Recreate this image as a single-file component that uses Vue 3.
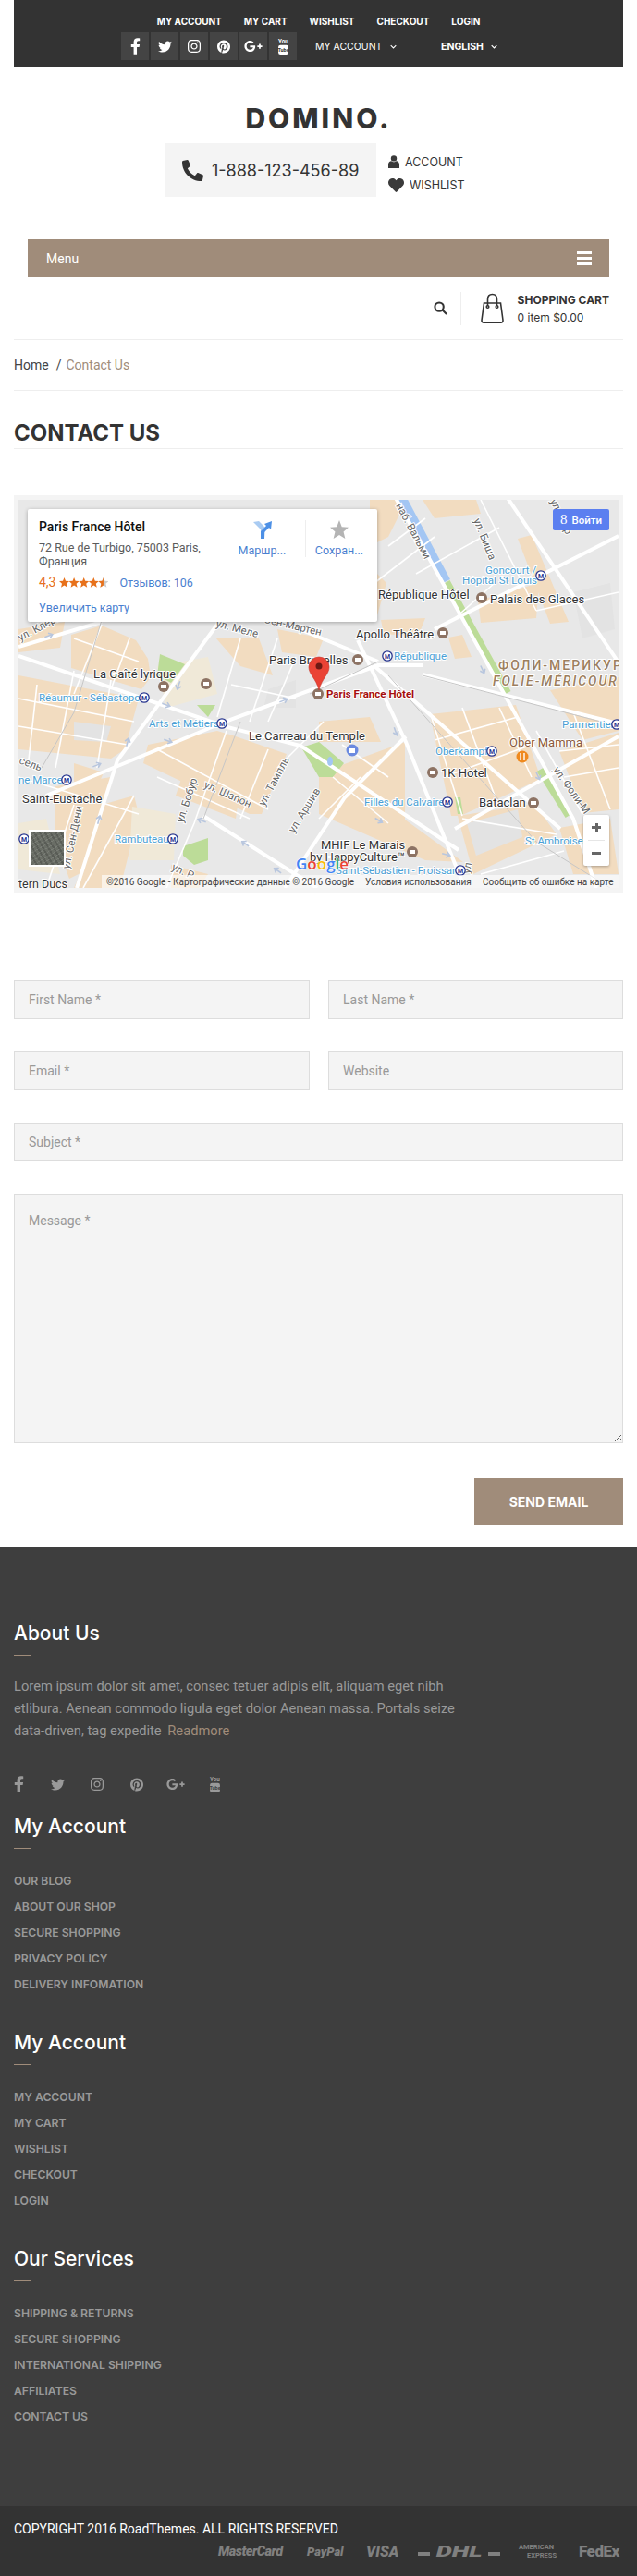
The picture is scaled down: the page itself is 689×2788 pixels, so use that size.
<template>
  <div class="page">
    <header class="wrap">
      <div class="topbar">
        <ul class="toplinks">
          <li v-for="l in topLinks" :key="l">{{ l }}</li>
        </ul>
        <div class="toprow">
          <a v-for="s in socials" :key="s.name" class="sq">
            <svg v-if="s.d" :viewBox="s.vb" :width="s.w" :height="s.h" fill="#fff"><path :d="s.d" /></svg>
            <svg v-else viewBox="0 0 14 22" width="13" height="20">
              <text x="7" y="8" text-anchor="middle" class="yt-a" fill="#fff">You</text>
              <rect x="1" y="9.5" width="12" height="11.5" rx="2.5" fill="#fff" />
              <text x="7" y="18" text-anchor="middle" class="yt-b" fill="#333">Tube</text>
            </svg>
          </a>
          <span class="acc">MY ACCOUNT <svg class="chev" viewBox="0 0 10 6" width="7" height="5"><path d="M1 1l4 4 4-4" fill="none" stroke="#fff" stroke-width="1.5" /></svg></span>
          <span class="lang">ENGLISH <svg class="chev" viewBox="0 0 10 6" width="7" height="5"><path d="M1 1l4 4 4-4" fill="none" stroke="#fff" stroke-width="1.8" /></svg></span>
        </div>
      </div>

      <div class="brand">
        <div class="logo">DOMINO.</div>
        <div class="contact-row">
          <div class="phone">
            <svg viewBox="0 0 512 512" width="23" height="23" fill="#333"><path transform="matrix(-1 0 0 1 512 0)" d="M493.4 24.6l-104-24c-11.3-2.6-22.9 3.3-27.5 13.9l-48 112c-4.2 9.8-1.4 21.3 6.9 28l60.6 49.6c-36 76.7-98.9 140.5-177.2 177.2l-49.6-60.6c-6.8-8.3-18.2-11.1-28-6.9l-112 48C3.9 366.5-2 378.1.6 389.4l24 104C27.1 504.2 36.7 512 48 512c256.1 0 464-207.5 464-464 0-11.2-7.7-20.9-18.6-23.4z" /></svg>
            <span>1-888-123-456-89</span>
          </div>
          <div class="acclinks">
            <div class="acclink">
              <svg viewBox="0 0 12 14" width="12" height="14" fill="#3a3a3a"><circle cx="6" cy="3.4" r="3.2" /><path d="M0 14V9.8C0 7.6 1.6 6.4 3.4 6.2 4.2 7 5 7.3 6 7.3S7.8 7 8.6 6.2C10.4 6.4 12 7.6 12 9.8V14z" /></svg>
              <span>ACCOUNT</span>
            </div>
            <div class="acclink">
              <svg viewBox="0 0 512 512" width="17" height="17" fill="#3a3a3a"><path d="M462.3 62.6C407.5 15.9 326 22.9 275.7 74.9L256 95.3l-19.7-20.4C186 22.9 104.5 15.9 49.7 62.6c-62.8 53.6-66.1 149.8-9.9 207.9l193.5 199.8c12.5 12.9 32.8 12.9 45.3 0l193.5-199.8c56.3-58.1 53-154.3-9.8-207.9z" /></svg>
              <span>WISHLIST</span>
            </div>
          </div>
        </div>
      </div>

      <nav class="menu">
        <span>Menu</span>
        <div class="burger"><i></i><i></i><i></i></div>
      </nav>

      <div class="cartrow">
        <svg class="search" viewBox="0 0 16 16" width="15" height="15" fill="none" stroke="#333" stroke-width="2.2"><circle cx="6.5" cy="6.5" r="5" /><path d="M10.2 10.2l4.8 4.8" /></svg>
        <div class="cartdiv"></div>
        <svg viewBox="0 0 27 33" width="27" height="33" fill="none" stroke="#333" stroke-width="1.6"><path d="M4.5 11h18l2.5 18.5c.2 1.7-.8 2.7-2.3 2.7H4.3c-1.500 0-2.500-1-2.300-2.700z" /><path d="M8.5 14V7c0-3.400 2-5.500 5-5.500s5 2.100 5 5.500v7" /><circle cx="8.5" cy="15" r="1.3" /><circle cx="18.5" cy="15" r="1.3" /></svg>
        <div class="carttext">
          <strong>SHOPPING CART</strong>
          <span>0 item $0.00</span>
        </div>
      </div>
    </header>

    <main class="wrap">
      <div class="crumbs"><span>Home</span><i>/</i><em>Contact Us</em></div>
      <h1 class="title">CONTACT US</h1>

      <div class="mapbox">
        <svg class="mapsvg" viewBox="0 0 649 420" width="649" height="420">
          <rect width="649" height="420" fill="#e8e8e8" />
          <polygon v-for="(p, i) in tan" :key="'t' + i" :points="p" fill="#f2dcc0" />
          <polygon v-for="(p, i) in beige" :key="'b' + i" :points="p" fill="#f0e9d8" />
          <polygon v-for="(p, i) in grey" :key="'g' + i" :points="p" fill="#e3e3e3" />
          <polygon v-for="(p, i) in green" :key="'p' + i" :points="p" fill="#bcdc98" />
          <path d="M415 -2L463 88" stroke="#a3c6f3" stroke-width="9" fill="none" />
          <path d="M463 89L529 209M564 292L595 342" stroke="#bcdc98" stroke-width="8" fill="none" />
          <path v-for="(r, i) in streets" :key="'s' + i" :d="r" stroke="#fff" stroke-width="1.6" fill="none" />
          <path v-for="(r, i) in roads" :key="'r' + i" :d="r" stroke="#fff" stroke-width="4" fill="none" />
          <path v-for="(r, i) in rails" :key="'l' + i" :d="r" stroke="#c6c6c6" stroke-width="1" fill="none" />
          <ellipse cx="337" cy="283" rx="3" ry="5" fill="#a3c6f3" />
          <path v-for="a in arrows" :key="a.join()" :transform="`translate(${a[0]} ${a[1]}) rotate(${a[2]})`" d="M-5 0H3M0 -3L4 0 0 3" fill="none" stroke="#b8c6de" stroke-width="1.6" />

          <text v-for="s in streetLabels" :key="s.t" :transform="`translate(${s.x} ${s.y}) rotate(${s.r})`" class="m-street">{{ s.t }}</text>
          <text v-for="l in darkLabels" :key="l.t" :x="l.x" :y="l.y" class="m-dark">{{ l.t }}</text>
          <text v-for="l in blueLabels" :key="l.t" :x="l.x" :y="l.y" class="m-blue">{{ l.t }}</text>
          <text x="519" y="184" class="m-area">ФОЛИ-МЕРИКУР</text>
          <text x="513" y="201" class="m-area m-it">FOLIE-MÉRICOUR</text>
          <text x="531" y="267" class="m-food">Ober Mamma</text>
          <text x="333" y="214" class="m-hotel">Paris France Hôtel</text>

          <g v-for="p in pois" :key="p[0] + '-' + p[1]">
            <circle :cx="p[0]" :cy="p[1]" r="6" fill="#8d7364" />
            <rect :x="p[0] - 3" :y="p[1] - 2" width="6" height="4" fill="#fff" />
          </g>
          <g v-for="m in metros" :key="m[0] + '_' + m[1]">
            <circle :cx="m[0]" :cy="m[1]" r="5.2" fill="#fff" stroke="#27358f" stroke-width="1.3" />
            <text :x="m[0]" :y="m[1] + 2.6" text-anchor="middle" class="m-metro">M</text>
          </g>
          <circle cx="361" cy="271" r="6.5" fill="#6b8ae0" />
          <rect x="358" y="269" width="6" height="5" fill="#fff" />
          <circle cx="545" cy="278" r="6.5" fill="#ef8a1f" />
          <path d="M543 274v8M547 274v8" stroke="#fff" stroke-width="1.4" />

          <path d="M325 206C322 193 314 189 314 181a11 11 0 0 1 22 0C336 189 328 193 325 206z" fill="#ea4335" stroke="#c5352a" stroke-width=".6" />
          <circle cx="325" cy="180" r="3.5" fill="#6e1a14" />

          <text x="300" y="400" class="m-google"><tspan fill="#4285f4">G</tspan><tspan fill="#ea4335">o</tspan><tspan fill="#fbbc05">o</tspan><tspan fill="#4285f4">g</tspan><tspan fill="#34a853">l</tspan><tspan fill="#ea4335">e</tspan></text>

          <rect x="90" y="406" width="559" height="14" fill="#fff" opacity=".62" />
          <text x="0" y="420" class="m-dark m-cut">tern Ducs</text>
          <text x="95" y="417" class="m-credit">©2016 Google - Картографические данные © 2016 Google</text>
          <text x="375" y="417" class="m-credit">Условия использования</text>
          <text x="502" y="417" class="m-credit">Сообщить об ошибке на карте</text>
        </svg>

        <div class="place">
          <div class="place-info">
            <div class="place-name">Paris France Hôtel</div>
            <div class="place-addr">72 Rue de Turbigo, 75003 Paris, Франция</div>
            <div class="place-rate">
              <b>4,3</b>
              <svg viewBox="0 0 53 11" width="53" height="11">
                <polygon v-for="n in 4" :key="n" :transform="`translate(${(n - 1) * 10.6} 0)`" points="5.5,0 7,3.8 11,4.1 8,6.7 9,10.8 5.5,8.6 2,10.8 3,6.7 0,4.1 4,3.8" fill="#e7711b" />
                <polygon transform="translate(42.4 0)" points="5.5,0 7,3.8 11,4.1 8,6.7 9,10.8 5.5,8.6 2,10.8 3,6.7 0,4.1 4,3.8" fill="#ccc" />
                <polygon transform="translate(42.4 0)" points="5.5,0 5.5,8.6 2,10.8 3,6.7 0,4.1 4,3.8" fill="#e7711b" />
              </svg>
              <a>Отзывов: 106</a>
            </div>
            <a class="place-big">Увеличить карту</a>
          </div>
          <div class="place-act first">
            <svg viewBox="0 0 20 20" width="20" height="20"><path d="M0 2l6-1 7 7-1 12H8V10z" fill="#a9cbf2" /><path d="M8 20v-8l6-6-2-2 8-3-1 9-2-2-5 5v7z" fill="#4d90e6" /></svg>
            <span>Маршр...</span>
          </div>
          <div class="place-act">
            <svg viewBox="0 0 22 22" width="22" height="22"><polygon points="11,0 14,8 22,8.5 16,13.8 18,22 11,17.5 4,22 6,13.8 0,8.5 8,8" fill="#b4b4b4" /></svg>
            <span>Сохран...</span>
          </div>
        </div>

        <div class="signin">
          <span class="g8">8</span>
          <span>Войти</span>
        </div>
        <div class="sat"></div>
        <div class="zoomer">
          <span class="plus"></span>
          <i></i>
          <span class="minus"></span>
        </div>
      </div>

      <form class="cform" @submit.prevent>
        <div class="two">
          <input placeholder="First Name *" />
          <input placeholder="Last Name *" />
        </div>
        <div class="two">
          <input placeholder="Email *" />
          <input placeholder="Website" />
        </div>
        <input placeholder="Subject *" />
        <textarea placeholder="Message *"></textarea>
        <div class="sendrow"><button type="submit">SEND EMAIL</button></div>
      </form>
    </main>

    <footer class="footer">
      <div class="fmain">
        <h3>About Us</h3>
        <p class="about">Lorem ipsum dolor sit amet, consec tetuer adipis elit, aliquam eget nibh etlibura. Aenean commodo ligula eget dolor Aenean massa. Portals seize data-driven, tag expedite <a>Readmore</a></p>
        <div class="fsocial">
          <span v-for="s in socials" :key="s.name" class="fs">
            <svg v-if="s.d" :viewBox="s.vb" :width="s.w" :height="s.h" fill="#999"><path :d="s.d" /></svg>
            <svg v-else viewBox="0 0 14 22" width="13" height="20">
              <text x="7" y="8" text-anchor="middle" class="yt-a" fill="#999">You</text>
              <rect x="1" y="9.5" width="12" height="11.5" rx="2.5" fill="#999" />
              <text x="7" y="18" text-anchor="middle" class="yt-b" fill="#3e3e3e">Tube</text>
            </svg>
          </span>
        </div>
        <section v-for="c in columns" :key="c.id" class="fcol">
          <h3>{{ c.title }}</h3>
          <ul>
            <li v-for="l in c.links" :key="l">{{ l }}</li>
          </ul>
        </section>
      </div>
      <div class="fbottom">
        <div class="copy">COPYRIGHT 2016 RoadThemes. ALL RIGHTS RESERVED</div>
        <div class="pays">
          <span class="p-mc">MasterCard</span>
          <span class="p-pp">PayPal</span>
          <span class="p-visa">VISA</span>
          <span class="p-dhl"><i></i><b>DHL</b><i></i></span>
          <span class="p-ae"><span>AMERICAN</span><span>EXPRESS</span></span>
          <span class="p-fx">FedEx</span>
        </div>
      </div>
    </footer>
  </div>
</template>

<script setup>
const topLinks = ['MY ACCOUNT', 'MY CART', 'WISHLIST', 'CHECKOUT', 'LOGIN']

const socials = [
  { name: 'fb', vb: '0 0 320 512', w: 11, h: 18, d: 'M279.14 288l14.22-92.66h-88.91v-60.13c0-25.35 12.42-50.06 52.24-50.06h40.42V6.26S260.43 0 225.36 0c-73.22 0-121.08 44.38-121.08 124.72v70.62H22.89V288h81.39v224h100.17V288z' },
  { name: 'tw', vb: '0 0 512 512', w: 15, h: 15, d: 'M459.37 151.716c.325 4.548.325 9.097.325 13.645 0 138.72-105.583 298.558-298.558 298.558-59.452 0-114.68-17.219-161.137-47.106 8.447.974 16.568 1.299 25.34 1.299 49.055 0 94.213-16.568 130.274-44.832-46.132-.975-84.792-31.188-98.112-72.772 6.498.974 12.995 1.624 19.818 1.624 9.421 0 18.843-1.3 27.614-3.573-48.081-9.747-84.143-51.98-84.143-102.985v-1.299c13.969 7.797 30.214 12.67 47.431 13.319-28.264-18.843-46.781-51.005-46.781-87.391 0-19.492 5.197-37.36 14.294-52.954 51.655 63.675 129.3 105.258 216.365 109.807-1.624-7.797-2.599-15.918-2.599-24.04 0-57.828 46.782-104.934 104.934-104.934 30.213 0 57.502 12.67 76.67 33.137 23.715-4.548 46.456-13.32 66.599-25.34-7.798 24.366-24.366 44.833-46.132 57.827 21.117-2.273 41.584-8.122 60.426-16.243-14.292 20.791-32.161 39.308-52.628 54.253z' },
  { name: 'ig', vb: '0 0 448 512', w: 14, h: 16, d: 'M224.1 141c-63.6 0-114.9 51.3-114.9 114.9s51.3 114.9 114.9 114.9S339 319.5 339 255.9 287.7 141 224.1 141zm0 189.6c-41.1 0-74.7-33.5-74.7-74.7s33.5-74.7 74.7-74.7 74.7 33.5 74.7 74.7-33.6 74.7-74.7 74.7zm146.4-194.3c0 14.9-12 26.8-26.8 26.8-14.9 0-26.8-12-26.8-26.8s12-26.8 26.8-26.8 26.8 12 26.8 26.8zm76.1 27.2c-1.7-35.9-9.9-67.7-36.2-93.9-26.2-26.2-58-34.4-93.9-36.2-37-2.1-147.9-2.1-184.9 0-35.8 1.7-67.6 9.9-93.9 36.1s-34.4 58-36.2 93.9c-2.1 37-2.1 147.9 0 184.9 1.7 35.9 9.9 67.7 36.2 93.9s58 34.4 93.9 36.2c37 2.1 147.9 2.1 184.9 0 35.9-1.7 67.7-9.9 93.9-36.2 26.2-26.2 34.4-58 36.2-93.9 2.1-37 2.1-147.8 0-184.8zM398.8 388c-7.8 19.6-22.9 34.7-42.6 42.6-29.5 11.7-99.5 9-132.1 9s-102.7 2.6-132.1-9c-19.6-7.8-34.7-22.9-42.6-42.6-11.7-29.5-9-99.5-9-132.1s-2.6-102.7 9-132.1c7.8-19.6 22.9-34.7 42.6-42.6 29.5-11.7 99.5-9 132.1-9s102.7-2.6 132.1 9c19.6 7.8 34.7 22.9 42.6 42.6 11.7 29.5 9 99.5 9 132.1s2.7 102.7-9 132.1z' },
  { name: 'pin', vb: '0 0 496 512', w: 14, h: 15, d: 'M496 256c0 137-111 248-248 248-25.6 0-50.2-3.9-73.4-11.1 10.1-16.5 25.2-43.5 30.8-65 3-11.6 15.4-59 15.4-59 8.1 15.4 31.7 28.5 56.8 28.5 74.8 0 128.7-68.8 128.7-154.3 0-81.9-66.9-143.2-152.9-143.2-107 0-163.9 71.8-163.9 150.1 0 36.4 19.4 81.7 50.3 96.1 4.7 2.2 7.2 1.2 8.3-3.3.8-3.4 5-20.3 6.9-28.1.6-2.5.3-4.7-1.7-7.1-10.1-12.5-18.3-35.3-18.3-56.6 0-54.7 41.4-107.6 112-107.6 60.9 0 103.6 41.5 103.6 100.9 0 67.1-33.9 113.6-78 113.6-24.3 0-42.6-20.1-36.7-44.8 7-29.5 20.5-61.3 20.5-82.6 0-19-10.2-34.9-31.4-34.9-24.9 0-44.9 25.7-44.9 60.2 0 22 7.4 36.8 7.4 36.8s-24.5 103.8-29 123.2c-5 21.4-3 51.6-.9 71.2C65.4 450.9 0 361.1 0 256 0 119 111 8 248 8s248 111 248 248z' },
  { name: 'gp', vb: '0 0 640 512', w: 20, h: 16, d: 'M386.061 228.496c1.834 9.692 3.143 19.384 3.143 31.956C389.204 370.205 315.599 448 204.8 448c-106.084 0-192-85.915-192-192s85.916-192 192-192c51.864 0 95.083 18.859 128.611 50.292l-52.126 50.03c-14.145-13.621-39.028-29.599-76.485-29.599-65.484 0-118.92 54.221-118.92 121.277 0 67.056 53.436 121.277 118.92 121.277 75.961 0 104.513-54.745 108.965-82.773H204.8v-66.009h181.261zm185.406 6.437V179.2h-56.001v55.733h-55.733v56.001h55.733v55.733h56.001v-55.733H627.2v-56.001h-55.733z' },
  { name: 'yt' }
]

const tan = [
  '57,146 90,136 127,152 140,172 143,192 133,205 57,182',
  '0,190 130,215 115,270 100,280 50,275 0,270',
  '60,285 92,295 85,312 60,305',
  '40,310 100,300 90,345 75,400 55,410 40,370',
  '90,330 125,320 130,340 110,420 60,420 80,375',
  '140,265 215,250 232,255 290,275 263,340 250,340 135,285',
  '213,149 260,150 275,190 240,180',
  '0,140 50,132 45,160 0,165',
  '180,290 240,310 235,345 170,320',
  '165,395 205,405 195,420 165,420',
  '325,240 380,235 392,262 325,262',
  '445,232 538,222 565,302 478,342 468,342',
  '475,342 558,329 582,362 492,405',
  '325,296 418,262 418,346 481,392 440,390 325,340',
  '575,206 649,192 649,250 610,260',
  '585,272 649,252 649,335 611,339',
  '465,149 480,146 490,170 472,172',
  '380,0 420,0 400,40 380,50',
  '437,0 495,0 500,15 450,20',
  '540,42 555,38 595,132 575,134',
  '497,109 563,90 560,128 500,133',
  '380,72 398,90 388,125 380,125',
  '392,130 440,128 432,148 395,145',
  '280,140 330,150 322,170 285,165',
  '585,355 640,345 649,405 600,405'
]
const beige = [
  '150,180 205,170 215,210 160,225',
  '123,332 170,340 168,390 120,390',
  '0,350 30,345 45,405 0,400'
]
const grey = [
  '270,205 300,195 300,225 265,225',
  '485,350 540,335 545,365 495,385',
  '600,100 640,90 645,140 610,150',
  '60,240 100,245 95,262 60,260'
]
const green = [
  '153,167 180,178 165,198 150,190',
  '193,222 213,222 205,235',
  '178,375 205,366 205,390 190,395 178,385',
  '306,268 325,262 352,285 340,300 325,300',
  '472,322 478,322 481,340 475,340'
]
const roads = [
  'M30 320L226 239L389 179L437 179',
  'M0 169L226 246L305 266L476 379',
  'M220 128L107 282L63 420',
  'M367 152L419 262L481 416',
  'M408 -2L600 345L625 420',
  'M529 -2L649 176',
  'M437 189L649 242',
  'M450 140L649 39',
  'M472 356L649 256',
  'M288 420L353 322L419 256',
  'M384 179L586 356',
  'M0 159L90 132',
  'M200 342L323 420',
  'M280 130L389 175'
]
const streets = [
  'M20 200L10 290', 'M60 185L40 290', 'M100 195L85 290', 'M0 215L125 240', 'M0 245L118 265',
  'M60 150L130 175', 'M90 135L60 210', 'M120 150L100 205', 'M0 300L130 340', 'M60 330L30 420',
  'M125 320L70 420', 'M150 270L270 335', 'M150 300L250 345', 'M225 250L190 350L160 420', 'M270 270L240 345',
  'M240 150L215 235', 'M280 150L250 240', 'M330 240L280 290', 'M300 170L270 240', 'M230 200L300 215',
  'M340 300L400 350', 'M325 345L370 300', 'M350 265L400 300', 'M445 230L480 342', 'M480 225L515 320',
  'M520 225L555 300', 'M450 260L540 235', 'M460 300L555 265', 'M480 345L582 362', 'M500 405L590 380',
  'M560 250L610 340', 'M600 230L640 335', 'M585 272L649 265', 'M590 300L649 290', 'M500 0L560 120',
  'M430 80L520 30', 'M400 50L440 20', 'M560 120L649 100', 'M470 130L515 90', 'M385 90L450 40'
]
const rails = ['M90 130L60 230L25 290', 'M200 345L240 240', 'M437 190L649 245', 'M400 190L560 370L640 420', 'M315 210L389 175']
// little one-way arrows on the big roads: x, y, angle
const arrows = [
  [33, 147, -20], [118, 262, -75], [162, 261, 20], [85, 287, -22], [287, 217, -22], [198, 347, 200],
  [245, 372, 215], [280, 401, 215], [87, 346, -75], [173, 201, 110], [160, 222, 20], [408, 251, 70],
  [390, 347, 30], [463, 384, 15], [502, 184, 65], [562, 299, 65]
]

const streetLabels = [
  { t: 'наб. Вальми', x: 408, y: 6, r: 62 },
  { t: 'ул. Биша', x: 492, y: 22, r: 68 },
  { t: 'ул. Мор', x: 575, y: 1, r: 65 },
  { t: 'ул. Меле', x: 213, y: 137, r: 15 },
  { t: '-Сен-Мартен', x: 262, y: 132, r: 13 },
  { t: 'ул. Клери', x: 2, y: 153, r: -28 },
  { t: 'ул. Бобур', x: 178, y: 350, r: -72 },
  { t: 'ул. Шапон', x: 200, y: 311, r: 24 },
  { t: 'ул. Тампль', x: 266, y: 332, r: -62 },
  { t: 'ул. Аршив', x: 298, y: 361, r: -58 },
  { t: 'ул. Сен-Дени', x: 55, y: 400, r: -78 },
  { t: 'ул. Фоли-М', x: 578, y: 292, r: 55 },
  { t: 'сель', x: 0, y: 285, r: 20 },
  { t: 'ул. Р', x: 165, y: 400, r: 25 },
  { t: 'ул', x: 488, y: 405, r: -80 }
]
const darkLabels = [
  { t: 'République Hôtel', x: 389, y: 107 },
  { t: 'Palais des Glaces', x: 510, y: 112 },
  { t: 'Apollo Théâtre', x: 365, y: 150 },
  { t: 'Paris Bruxelles', x: 271, y: 178 },
  { t: 'La Gaîté lyrique', x: 81, y: 193 },
  { t: 'Le Carreau du Temple', x: 249, y: 260 },
  { t: '1K Hotel', x: 457, y: 300 },
  { t: 'Bataclan', x: 498, y: 332 },
  { t: 'MHIF Le Marais', x: 327, y: 378 },
  { t: 'by HappyCulture™', x: 315, y: 391 },
  { t: 'Saint-Eustache', x: 4, y: 328 }
]
const blueLabels = [
  { t: 'République', x: 406, y: 173 },
  { t: 'Réaumur - Sébastopol', x: 22, y: 218 },
  { t: 'Arts et Métiers', x: 141, y: 246 },
  { t: 'Oberkampf', x: 451, y: 276 },
  { t: 'Parmentier', x: 588, y: 247 },
  { t: 'Filles du Calvaire', x: 374, y: 331 },
  { t: 'St Ambroise', x: 548, y: 373 },
  { t: 'Saint-Sébastien - Froissart', x: 343, y: 405 },
  { t: 'Rambuteau', x: 104, y: 371 },
  { t: 'ne Marcel', x: 0, y: 307 },
  { t: 'Goncourt /', x: 505, y: 80 },
  { t: 'Hôpital St Louis', x: 480, y: 91 }
]
const pois = [[501, 106], [459, 144], [367, 173], [157, 202], [203, 199], [324, 210], [448, 295], [557, 328], [426, 381]]
const metros = [[399, 169], [136, 214], [220, 242], [512, 272], [647, 243], [464, 327], [478, 401], [167, 367], [52, 303], [565, 82], [6, 367]]

const columns = [
  { id: 'acc1', title: 'My Account', links: ['OUR BLOG', 'ABOUT OUR SHOP', 'SECURE SHOPPING', 'PRIVACY POLICY', 'DELIVERY INFOMATION'] },
  { id: 'acc2', title: 'My Account', links: ['MY ACCOUNT', 'MY CART', 'WISHLIST', 'CHECKOUT', 'LOGIN'] },
  { id: 'serv', title: 'Our Services', links: ['SHIPPING & RETURNS', 'SECURE SHOPPING', 'INTERNATIONAL SHIPPING', 'AFFILIATES', 'CONTACT US'] }
]
</script>

<style scoped>
.page {
  width: 689px;
  height: 2788px;
  overflow: hidden;
  font-family: Roboto, "Liberation Sans", sans-serif;
  color: #333;
  background: #fff;
}
ul { list-style: none; margin: 0; padding: 0; }
.wrap { margin: 0 15px; }

.topbar {
  height: 73px;
  box-sizing: border-box;
  padding-top: 15px;
  background: #333;
  color: #fff;
  font-family: Inter, sans-serif;
}
.toplinks {
  display: flex;
  justify-content: center;
  gap: 24px;
  font-size: 10px;
  font-weight: 700;
  line-height: 16px;
}
.toprow {
  display: flex;
  align-items: center;
  gap: 2px;
  margin-top: 4px;
  padding-left: 116px;
}
.sq {
  display: flex;
  align-items: center;
  justify-content: center;
  width: 30px;
  height: 30px;
  background: #444;
}
.acc, .lang { font-size: 10.5px; white-space: nowrap; }
.acc { margin-left: 18px; width: 134px; }
.lang { font-weight: 700; }
.chev { margin-left: 6px; vertical-align: 1px; }
.yt-a { font: 700 7px Roboto, sans-serif; }
.yt-b { font: 700 6px Roboto, sans-serif; }

.brand { border-bottom: 1px solid #eee; padding: 35px 0 30px; }
.logo {
  font-family: Inter, sans-serif;
  font-size: 30px;
  font-weight: 800;
  line-height: 40px;
  letter-spacing: 3px;
  text-align: center;
  color: #333;
}
.contact-row {
  display: flex;
  align-items: center;
  margin: 7px 0 0 163px;
}
.phone {
  display: flex;
  align-items: center;
  gap: 9px;
  width: 229px;
  height: 58px;
  box-sizing: border-box;
  padding-left: 19px;
  background: #f4f4f4;
  font-family: Inter, sans-serif;
  font-size: 18px;
}
.acclinks { margin: 7px 0 0 13px; font-family: Inter, sans-serif; font-size: 12.5px; }
.acclink { display: flex; align-items: center; gap: 6px; height: 25px; }

.menu {
  display: flex;
  align-items: center;
  justify-content: space-between;
  height: 41px;
  margin: 15px 15px 0;
  padding: 0 19px 0 20px;
  background: #a08c7a;
  color: #fff;
  font-size: 14px;
}
.burger { display: flex; flex-direction: column; gap: 3px; }
.burger i { display: block; width: 16px; height: 3px; background: #fff; }

.cartrow {
  display: flex;
  align-items: center;
  justify-content: flex-end;
  height: 67px;
  border-bottom: 1px solid #eee;
  font-family: Inter, sans-serif;
}
.search { margin-right: 14px; }
.cartdiv { width: 1px; height: 36px; margin-right: 20px; background: #eee; }
.carttext { display: flex; flex-direction: column; gap: 4px; margin: 0 15px 0 14px; font-size: 12px; }
.carttext strong { font-weight: 700; white-space: nowrap; }

.crumbs {
  display: flex;
  align-items: center;
  height: 54px;
  border-bottom: 1px solid #eee;
  font-size: 14px;
  color: #444;
}
.crumbs i { margin: 0 5px 0 8px; font-style: normal; }
.crumbs em { font-style: normal; color: #a08c7a; }

.title {
  margin: 0;
  padding: 31px 0 1px;
  height: 30px;
  border-bottom: 1px solid #eee;
  font-family: Inter, sans-serif;
  font-size: 24px;
  font-weight: 700;
  line-height: 30px;
  color: #333;
}

.mapbox {
  position: relative;
  width: 649px;
  height: 420px;
  margin-top: 50px;
  border: 5px solid #f4f4f4;
  overflow: hidden;
}
.mapsvg { display: block; }
.m-street { font: 11.5px Roboto, sans-serif; fill: #666; paint-order: stroke; stroke: #fff; stroke-width: 2px; }
.m-dark { font: 13px Roboto, sans-serif; fill: #333; paint-order: stroke; stroke: #fff; stroke-width: 2px; }
.m-blue { font: 11.5px Roboto, sans-serif; fill: #4b9fd5; paint-order: stroke; stroke: #fff; stroke-width: 2px; }
.m-area { font: 500 14px Roboto, sans-serif; letter-spacing: 2px; fill: #9c7e5e; paint-order: stroke; stroke: #fff; stroke-width: 2px; }
.m-it { font-style: italic; }
.m-food { font: 13px Roboto, sans-serif; fill: #8a5a3c; paint-order: stroke; stroke: #fff; stroke-width: 2px; }
.m-hotel { font: 700 11.5px Roboto, sans-serif; fill: #a50e0e; paint-order: stroke; stroke: #fff; stroke-width: 2px; }
.m-metro { font: 700 7px Roboto, sans-serif; fill: #27358f; }
.m-google { font: 600 17px "Open Sans", sans-serif; paint-order: stroke; stroke: #fff; stroke-width: 1px; }
.m-credit { font: 10px Roboto, sans-serif; fill: #444; }
.m-cut { font-size: 12.5px; }

.place {
  position: absolute;
  left: 10px;
  top: 10px;
  display: flex;
  align-items: flex-start;
  width: 378px;
  height: 122px;
  background: #fff;
  box-shadow: 0 1px 4px rgba(0, 0, 0, .3);
  border-radius: 2px;
}
.place-info { width: 207px; box-sizing: border-box; padding: 10px 0 0 12px; }
.place-name { font-size: 14px; font-weight: 500; line-height: 18px; color: #111; }
.place-addr { width: 180px; margin-top: 6px; font-size: 12.5px; line-height: 15px; color: #5b5b5b; }
.place-rate { display: flex; align-items: center; gap: 3px; margin-top: 5px; height: 20px; }
.place-rate b { font-size: 14px; font-weight: 400; color: #e7711b; }
.place-rate a { margin-left: 10px; font-size: 12.5px; color: #4a7fd0; }
.place-big { display: block; margin-top: 10px; font-size: 12.5px; color: #4a7fd0; }
.place-act {
  display: flex;
  flex-direction: column;
  align-items: center;
  gap: 5px;
  width: 72px;
  height: 40px;
  margin-top: 12px;
  font-size: 12.5px;
  color: #4a7fd0;
}
.place-act.first { width: 93px; border-right: 1px solid #eee; }

.signin {
  position: absolute;
  left: 578px;
  top: 10px;
  display: flex;
  align-items: center;
  gap: 5px;
  width: 61px;
  height: 23px;
  box-sizing: border-box;
  padding-left: 8px;
  background: #5b7ff0;
  border-radius: 2px;
  color: #fff;
  font-size: 11.5px;
  font-weight: 500;
}
.g8 { font-family: "Liberation Serif", serif; font-size: 15px; }
.sat {
  position: absolute;
  left: 11px;
  top: 357px;
  width: 36px;
  height: 36px;
  border: 2px solid #fff;
  background-color: #6a6e66;
  background-image:
    repeating-linear-gradient(60deg, rgba(0, 0, 0, .16) 0 2px, transparent 2px 5px),
    repeating-linear-gradient(150deg, rgba(255, 255, 255, .1) 0 1px, transparent 1px 4px);
}
.zoomer {
  position: absolute;
  left: 611px;
  top: 341px;
  display: flex;
  flex-direction: column;
  width: 28px;
  height: 55px;
  background: #fff;
  box-shadow: 0 1px 3px rgba(0, 0, 0, .3);
  border-radius: 2px;
}
.zoomer i { height: 1px; margin: 0 5px; background: #e6e6e6; }
.plus, .minus { position: relative; flex: 1; }
.plus::before, .minus::before, .plus::after {
  content: "";
  position: absolute;
  left: 9px;
  top: 12px;
  width: 10px;
  height: 3px;
  background: #666;
}
.plus::after { left: 12.5px; top: 8.5px; width: 3px; height: 10px; }

.cform { display: flex; flex-direction: column; gap: 35px; margin-top: 95px; }
.two { display: grid; grid-template-columns: 320px 319px; gap: 20px; }
.cform input, .cform textarea {
  display: block;
  width: 100%;
  box-sizing: border-box;
  height: 42px;
  padding: 0 15px;
  border: 1px solid #ddd;
  border-radius: 0;
  background: #f4f4f4;
  font-family: Roboto, sans-serif;
  font-size: 14px;
  color: #333;
  outline: none;
}
.cform textarea { height: 270px; padding-top: 20px; }
.cform input::placeholder, .cform textarea::placeholder { color: #999; opacity: 1; }
.sendrow { display: flex; justify-content: flex-end; margin-top: 3px; }
.sendrow button {
  width: 161px;
  height: 50px;
  border: 0;
  background: #a08c7a;
  color: #fff;
  font-family: Inter, sans-serif;
  font-size: 14px;
  font-weight: 700;
}

.footer { margin-top: 24px; background: #3e3e3e; color: #999; }
.fmain { height: 1038px; box-sizing: border-box; padding: 79px 15px 0; }
.footer h3 {
  margin: 0;
  position: relative;
  height: 39px;
  font-family: Inter, sans-serif;
  font-size: 21px;
  font-weight: 500;
  line-height: 30px;
  color: #fff;
}
.footer h3::after {
  content: "";
  position: absolute;
  left: 0;
  top: 38px;
  width: 18px;
  height: 1px;
  background: #a08c7a;
}
.about {
  width: 495px;
  margin: 21px 0 0;
  font-size: 14.7px;
  line-height: 24px;
}
.about a { margin-left: 3px; color: #a08c7a; }
.fsocial { display: flex; align-items: center; height: 24px; margin-top: 34px; }
.fs { display: flex; justify-content: center; width: 42.5px; margin-left: -16px; margin-right: 16px; }
.fcol { margin-top: 19px; }
.fcol + .fcol { margin-top: 34px; }
.fcol ul { margin-top: 21px; }
.fcol li {
  font-family: Inter, sans-serif;
  font-size: 12.2px;
  font-weight: 600;
  line-height: 28px;
  color: #999;
}
.fbottom { height: 76px; box-sizing: border-box; padding-top: 13px; background: #333; }
.copy { padding-left: 15px; font-size: 14px; line-height: 24px; color: #fff; }
.pays {
  display: flex;
  align-items: center;
  justify-content: flex-end;
  height: 24px;
  padding-right: 18px;
  color: #808080;
  font-family: Roboto, sans-serif;
  font-weight: 900;
  white-space: nowrap;
}
.p-mc { width: 76px; font-size: 14.5px; font-style: italic; letter-spacing: -.5px; }
.p-pp { width: 44px; margin-left: 20px; font-size: 13px; font-style: italic; }
.p-visa { width: 37px; margin-left: 20px; font-size: 16px; font-style: italic; }
.p-dhl { display: flex; align-items: center; width: 93px; margin-left: 19px; font-size: 16px; font-style: italic; }
.p-dhl i { display: block; width: 13px; height: 4px; background: #808080; margin-top: 5px; }
.p-dhl b { display: inline-block; margin: 0 17px; font-weight: 900; transform: scaleX(1.7); }
.p-ae { display: flex; flex-direction: column; align-items: flex-end; width: 41px; margin-left: 16px; font-size: 7.5px; font-weight: 700; line-height: 9px; }
.p-ae span:first-child { align-self: flex-start; }
.p-fx { width: 45px; margin-left: 24px; font-size: 17px; letter-spacing: -.5px; }
</style>

<style>
html, body { margin: 0; padding: 0; }
</style>
